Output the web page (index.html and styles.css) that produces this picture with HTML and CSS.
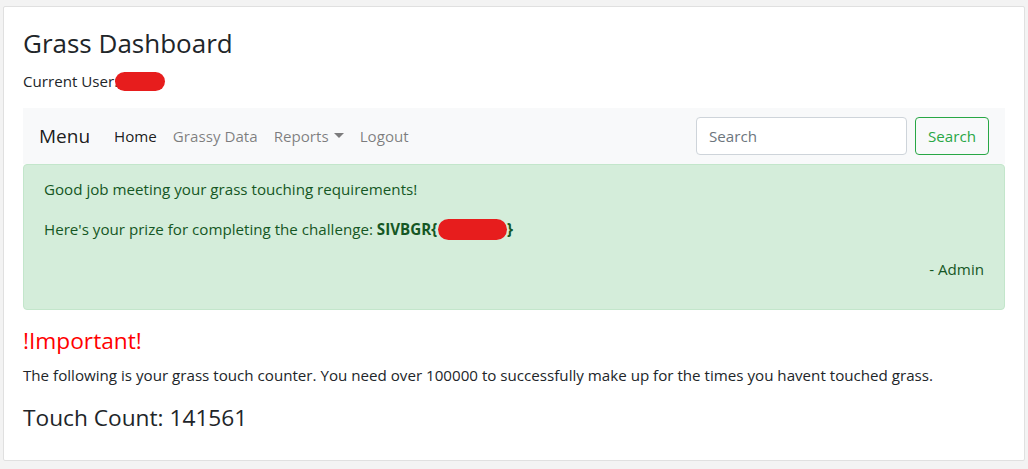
FILE: index.html
```html
<!DOCTYPE html>
<html lang="en">
<head>
<meta charset="utf-8">
<title>Grass Dashboard</title>
<link rel="stylesheet" href="styles.css">
</head>
<body>
<div class="card">
  <div class="card-body">
    <h3 class="title">Grass Dashboard</h3>
    <p class="user">Current User:<span class="redact redact-user"></span></p>

    <nav class="navbar">
      <span class="brand">Menu</span>
      <ul class="nav">
        <li><a class="nav-link active">Home</a></li>
        <li><a class="nav-link">Grassy Data</a></li>
        <li><a class="nav-link dropdown">Reports</a></li>
        <li><a class="nav-link">Logout</a></li>
      </ul>
      <form class="search">
        <input class="search-input" type="text" placeholder="Search">
        <button class="search-btn" type="button">Search</button>
      </form>
    </nav>

    <div class="alert">
      <p>Good job meeting your grass touching requirements!</p>
      <p>Here's your prize for completing the challenge: <b class="flag">SIVBGR{<span class="redact redact-flag"></span>}</b></p>
      <p class="sign">- Admin</p>
    </div>

    <h4 class="important">!Important!</h4>
    <p class="counter-note">The following is your grass touch counter. You need over 100000 to successfully make up for the times you havent touched grass.</p>
    <h4 class="count">Touch Count: 141561</h4>
  </div>
</div>
</body>
</html>
```

FILE: styles.css
```css
* { box-sizing: border-box; }

html, body {
  margin: 0;
  background: #f3f3f3;
}

body {
  padding: 6px 3px 0 3px;
  font-family: "Open Sans", "Noto Sans", sans-serif;
  font-size: 15.15px;
  line-height: 24px;
  color: #212529;
}

.card {
  width: 1022px;
  background: #fff;
  border: 1px solid #e0e0e0;
  border-radius: 2px;
}

.card-body {
  padding: 20px 19px 19px 19px;
}

h3, h4, p { margin-top: 0; }

.title {
  font-size: 26px;
  font-weight: 400;
  line-height: 33.6px;
  margin-bottom: 8px;
}

p { margin-bottom: 16px; }

.user { margin-bottom: 15px; }

.redact {
  display: inline-block;
  background: #e71d1d;
  border-radius: 11px;
  vertical-align: middle;
}

.redact-user {
  width: 50px;
  height: 19px;
  margin-left: -3px;
  margin-top: -3px;
}

.redact-flag {
  width: 69px;
  height: 21px;
  margin-left: 1px;
  margin-top: -2px;
}

.navbar {
  display: flex;
  align-items: center;
  background: #f8f9fa;
  padding: 8px 16px;
  height: 56px;
}

.brand {
  font-size: 19px;
  line-height: 30px;
  padding: 5px 0;
  margin-right: 16px;
  color: rgba(0,0,0,.9);
}

.nav {
  display: flex;
  list-style: none;
  margin: 0;
  padding: 0;
  flex: 1;
}

.nav-link {
  display: block;
  padding: 8px;
  color: rgba(0,0,0,.5);
}

.nav-link.active { color: rgba(0,0,0,.9); }

.dropdown::after {
  content: "";
  display: inline-block;
  margin-left: 5px;
  vertical-align: 4px;
  border-top: 5px solid;
  border-left: 5px solid transparent;
  border-right: 5px solid transparent;
}

.search {
  display: flex;
  align-items: center;
  gap: 8px;
}

.search-input {
  width: 211px;
  height: 38px;
  padding: 6px 12px;
  font: inherit;
  color: #495057;
  background: #fff;
  border: 1px solid #ced4da;
  border-radius: 4px;
}

.search-input::placeholder { color: #6c757d; }

.search-btn {
  height: 38px;
  padding: 6px 12px;
  font: inherit;
  color: #28a745;
  background: transparent;
  border: 1px solid #28a745;
  border-radius: 4px;
}

.alert {
  background: #d4edda;
  border: 1px solid #c3e6cb;
  color: #155724;
  border-radius: 4px;
  padding: 12px 20px 12px 20px;
  margin-bottom: 17px;
}

.flag { font-weight: 700; color: #155724; }

.sign { text-align: right; }

h4 {
  font-size: 22.7px;
  font-weight: 400;
  line-height: 28.8px;
  margin-bottom: 8px;
}

.important { color: #ff0000; }

.counter-note { margin-bottom: 17px; }

.count { margin-bottom: 8px; }
```
